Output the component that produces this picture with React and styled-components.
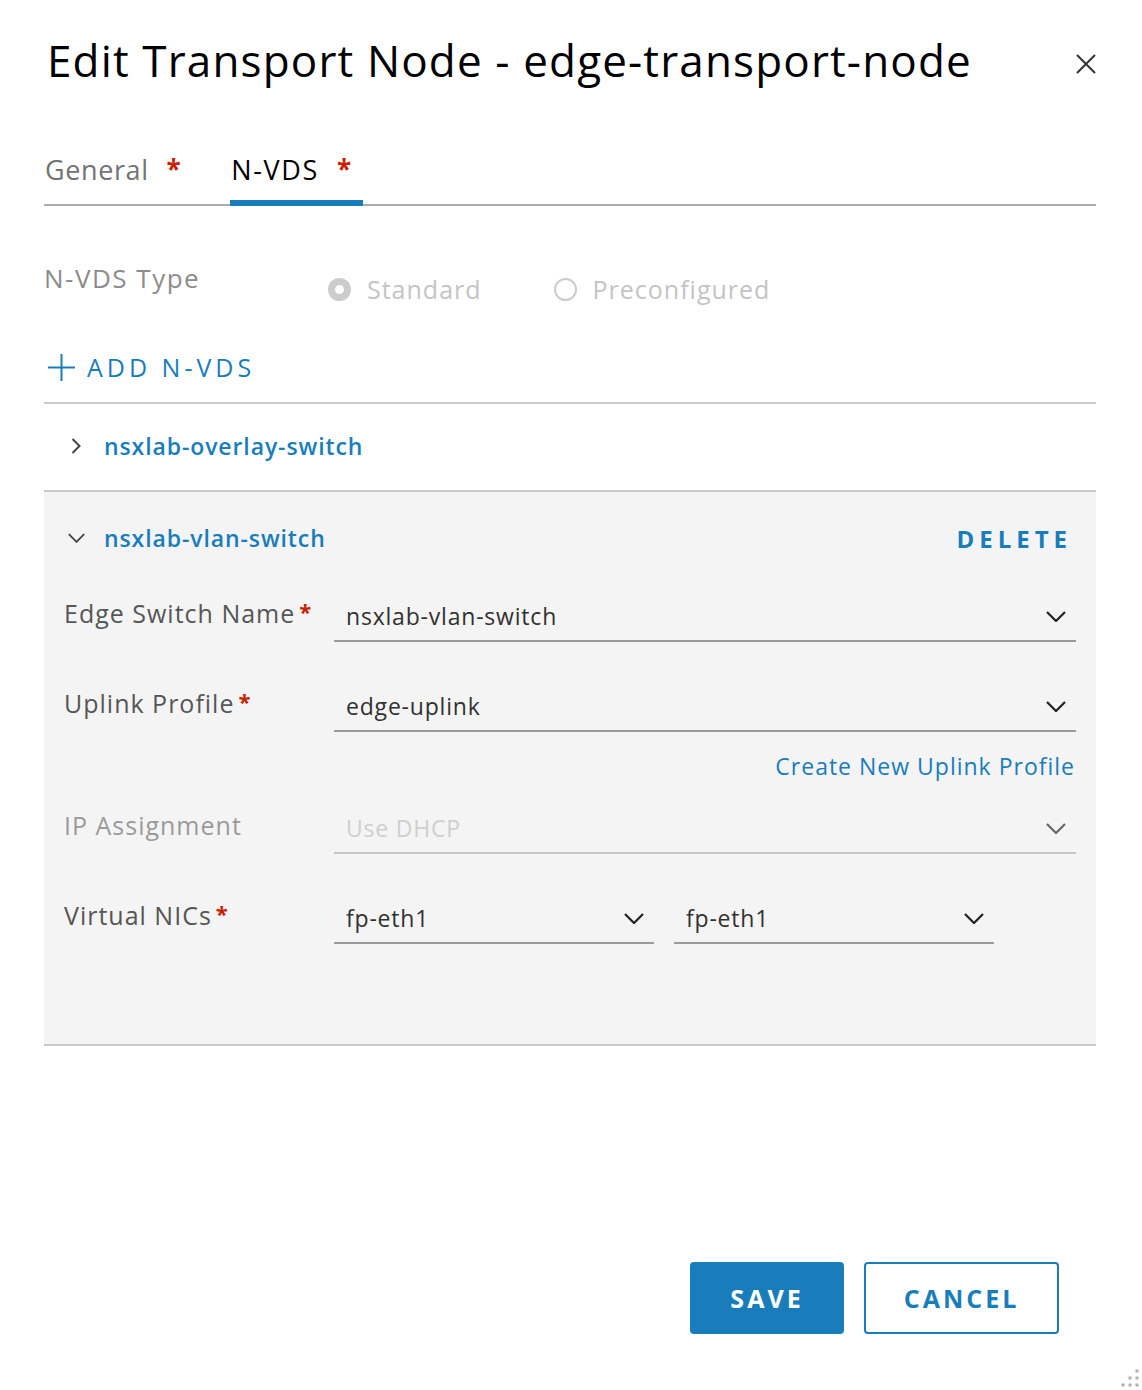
import React from 'react';
import styled, { createGlobalStyle } from 'styled-components';

const GlobalStyle = createGlobalStyle`
    html, body {
        margin: 0;
        padding: 0;
        background: #ffffff;
    }
    body {
        font-family: "Open Sans", "Liberation Sans", sans-serif;
        color: #565656;
    }
`

const BLUE = '#1a7dbb';

const Modal = styled.div`
    position: relative;
    width: 1142px;
    height: 1390px;
    box-sizing: border-box;
    padding: 0 46px 0 44px;
    background: #fff;
`

const Header = styled.div`
    display: flex;
    align-items: flex-start;
    justify-content: space-between;
    padding-top: 36px;
`

const Title = styled.h1`
    margin: 0 0 0 3px;
    font-size: 44px;
    line-height: 48px;
    font-weight: 400;
    letter-spacing: 1.15px;
    color: #000;
`

const CloseButton = styled.button`
    border: none;
    background: none;
    padding: 0;
    margin-top: 18px;
    width: 20px;
    height: 20px;
    display: flex;
`

const TabBar = styled.div`
    display: flex;
    margin-top: 70px;
    border-bottom: 2px solid #adadad;
`

const Tab = styled.div`
    display: flex;
    align-items: flex-start;
    padding: 0 10px 14px 1px;
    margin-right: 39px;
    margin-bottom: ${props => (props.active ? '-2px' : '0')};
    border-bottom: ${props => (props.active ? `6px solid ${BLUE}` : 'none')};
    font-size: 27px;
    line-height: 32px;
    letter-spacing: ${props => (props.active ? '1.6px' : '0.6px')};
    color: ${props => (props.active ? '#000' : '#737373')};
`

const Required = styled.span`
    color: #c92100;
    font-weight: 700;
    font-size: ${props => props.size || 26}px;
    line-height: 1;
    margin-left: ${props => props.gap || 18}px;
    margin-top: ${props => props.top || 2}px;
`

const TypeRow = styled.div`
    display: grid;
    grid-template-columns: 284px 1fr;
    margin-top: 57px;
`

const TypeLabel = styled.div`
    font-size: 26px;
    line-height: 30px;
    letter-spacing: 1.5px;
    color: #8c8c8c;
`

const RadioGroup = styled.div`
    display: flex;
    gap: 72px;
    padding-top: 11px;
`

const RadioOption = styled.label`
    display: flex;
    align-items: center;
    gap: 16px;
    font-size: 25px;
    line-height: 30px;
    letter-spacing: 1px;
    color: #c4c4c4;
`

const RadioCircle = styled.span`
    box-sizing: border-box;
    width: 23px;
    height: 23px;
    border-radius: 50%;
    background: #fff;
    border: ${props => (props.checked ? '7px solid #cccccc' : '2px solid #cccccc')};
`

const AddButton = styled.button`
    display: flex;
    align-items: center;
    gap: 12px;
    margin-top: 48px;
    padding: 0 0 0 4px;
    border: none;
    background: none;
    font-family: inherit;
    font-size: 25px;
    line-height: 30px;
    letter-spacing: 4px;
    color: ${BLUE};
`

const SwitchList = styled.div`
    margin-top: 20px;
    border-top: 2px solid #cccccc;
`

const SwitchItem = styled.div`
    background: ${props => (props.open ? '#f4f4f4' : '#fff')};
    border-bottom: 2px solid #c8c8c8;
    padding: ${props => (props.open ? '31px 20px 100px 20px' : '0 20px')};
`

const SwitchHead = styled.div`
    display: flex;
    align-items: center;
    justify-content: space-between;
    height: ${props => (props.open ? '30px' : '86px')};
    padding-bottom: ${props => (props.open ? '0' : '3px')};
    box-sizing: border-box;
`

const SwitchName = styled.div`
    display: flex;
    align-items: center;
    font-size: 23px;
    line-height: 30px;
    font-weight: 600;
    letter-spacing: 0.9px;
    color: ${BLUE};
`

const Caret = styled.span`
    display: flex;
    justify-content: center;
    width: 24px;
    margin-right: 16px;
`

const DeleteButton = styled.button`
    border: none;
    background: none;
    padding: 0;
    margin-right: 4px;
    font-family: inherit;
    font-size: 24px;
    font-weight: 700;
    letter-spacing: 5px;
    color: ${BLUE};
`

const FormRow = styled.div`
    display: grid;
    grid-template-columns: 270px 1fr;
    margin-top: ${props => props.top}px;
`

const FieldLabel = styled.div`
    display: flex;
    align-items: flex-start;
    padding-top: 4px;
    font-size: 25px;
    line-height: 30px;
    letter-spacing: 1px;
    color: ${props => (props.disabled ? '#9a9a9a' : '#565656')};
`

const Controls = styled.div`
    display: flex;
    gap: 20px;
`

const Select = styled.div`
    display: flex;
    align-items: center;
    justify-content: space-between;
    box-sizing: border-box;
    width: ${props => props.width || '100%'};
    height: 48px;
    padding: 0 10px 2px 12px;
    border-bottom: 2px solid ${props => (props.disabled ? '#c6c6c6' : '#9a9a9a')};
    font-size: 23px;
    line-height: 30px;
    letter-spacing: 0.8px;
    color: ${props => (props.disabled ? '#cfcfcf' : '#313131')};
`

const LinkRow = styled.div`
    display: flex;
    justify-content: flex-end;
    margin-top: 19px;
    padding-right: 1px;
`

const Link = styled.a`
    font-size: 23px;
    line-height: 30px;
    letter-spacing: 1px;
    color: ${BLUE};
    text-decoration: none;
`

const Footer = styled.div`
    display: flex;
    justify-content: flex-end;
    gap: 20px;
    margin-top: 216px;
    padding-right: 37px;
`

const Button = styled.button`
    box-sizing: border-box;
    height: 72px;
    width: ${props => props.width}px;
    border-radius: 4px;
    border: 2px solid ${BLUE};
    background: ${props => (props.primary ? BLUE : '#fff')};
    color: ${props => (props.primary ? '#fff' : BLUE)};
    font-family: inherit;
    font-size: 25px;
    font-weight: 700;
    letter-spacing: 3px;
`

const Grip = styled.svg`
    position: absolute;
    right: 0;
    bottom: 0;
`

const ChevronDown = ({ color = '#222', w = 20, h = 11 }) => (
    <svg width={w} height={h} viewBox="0 0 20 11">
        <polyline points="1,1 10,10 19,1" fill="none" stroke={color} strokeWidth="2.2" />
    </svg>
)

const ChevronRight = () => (
    <svg width="10" height="16" viewBox="0 0 10 16">
        <polyline points="1.5,1 8.5,8 1.5,15" fill="none" stroke="#444" strokeWidth="2" />
    </svg>
)

const fields = [
    { label: 'Edge Switch Name', required: true, value: 'nsxlab-vlan-switch', top: 41 },
    { label: 'Uplink Profile', required: true, value: 'edge-uplink', top: 42, link: 'Create New Uplink Profile' },
    { label: 'IP Assignment', value: 'Use DHCP', disabled: true, top: 25 },
]

export default function App() {
    return (
        <Modal>
            <GlobalStyle />
            <Header>
                <Title>Edit Transport Node - edge-transport-node</Title>
                <CloseButton>
                    <svg width="20" height="20" viewBox="0 0 20 20">
                        <path d="M1 1 L19 19 M19 1 L1 19" stroke="#333" strokeWidth="2" />
                    </svg>
                </CloseButton>
            </Header>

            <TabBar>
                <Tab>General<Required>*</Required></Tab>
                <Tab active>N-VDS<Required gap={18}>*</Required></Tab>
            </TabBar>

            <TypeRow>
                <TypeLabel>N-VDS Type</TypeLabel>
                <RadioGroup>
                    <RadioOption><RadioCircle checked />Standard</RadioOption>
                    <RadioOption><RadioCircle />Preconfigured</RadioOption>
                </RadioGroup>
            </TypeRow>

            <AddButton>
                <svg width="27" height="27" viewBox="0 0 27 27">
                    <path d="M13.5 0 V27 M0 13.5 H27" stroke={BLUE} strokeWidth="2" />
                </svg>
                ADD N-VDS
            </AddButton>

            <SwitchList>
                <SwitchItem>
                    <SwitchHead>
                        <SwitchName>
                            <Caret><ChevronRight /></Caret>
                            nsxlab-overlay-switch
                        </SwitchName>
                    </SwitchHead>
                </SwitchItem>

                <SwitchItem open>
                    <SwitchHead open>
                        <SwitchName>
                            <Caret><ChevronDown color="#444" w={17} h={10} /></Caret>
                            nsxlab-vlan-switch
                        </SwitchName>
                        <DeleteButton>DELETE</DeleteButton>
                    </SwitchHead>

                    {fields.map((f) => (
                        <React.Fragment key={f.label}>
                            <FormRow top={f.top}>
                                <FieldLabel disabled={f.disabled}>
                                    {f.label}
                                    {f.required ? <Required size={22} gap={4} top={0}>*</Required> : null}
                                </FieldLabel>
                                <Select disabled={f.disabled}>
                                    {f.value}
                                    <ChevronDown color={f.disabled ? '#666' : '#222'} />
                                </Select>
                            </FormRow>
                            {f.link ?
                                <LinkRow><Link href="#">{f.link}</Link></LinkRow>
                                : null
                            }
                        </React.Fragment>
                    ))}

                    <FormRow top={42}>
                        <FieldLabel>
                            Virtual NICs
                            <Required size={22} gap={4} top={0}>*</Required>
                        </FieldLabel>
                        <Controls>
                            <Select width="320px">fp-eth1<ChevronDown /></Select>
                            <Select width="320px">fp-eth1<ChevronDown /></Select>
                        </Controls>
                    </FormRow>
                </SwitchItem>
            </SwitchList>

            <Footer>
                <Button primary width={154}>SAVE</Button>
                <Button width={195}>CANCEL</Button>
            </Footer>

            <Grip width="22" height="22" viewBox="0 0 22 22">
                {[[17, 3], [10, 10], [17, 10], [3, 17], [10, 17], [17, 17]].map(([x, y]) => (
                    <rect key={`${x}-${y}`} x={x - 1.5} y={y - 1.5} width="3" height="3" fill="#b0b0b0" />
                ))}
            </Grip>
        </Modal>
    )
}
